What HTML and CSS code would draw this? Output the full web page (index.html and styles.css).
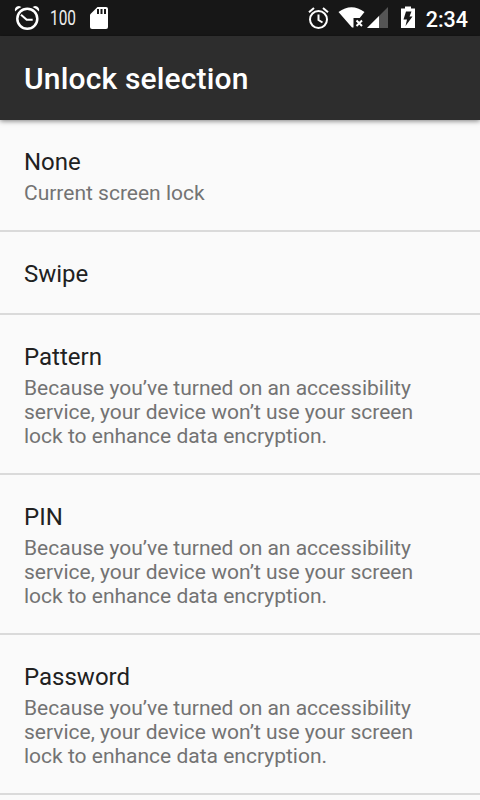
FILE: index.html
```
<!DOCTYPE html>
<html lang="en"><head><meta charset="utf-8"><title>Unlock selection</title><link rel="stylesheet" href="styles.css"></head>
<body>
<div class="status">
<svg class="icons" width="480" height="36" viewBox="0 0 480 36" fill="#fff">
<g fill="none" stroke="#fff"><circle cx="27.300" cy="18.700" r="10" stroke-width="2.500"/><path d="M21 14.800l5.700 5h6" stroke-width="2"/></g>
<path d="M15 11.500q-1-5 4-5.500l2.500 1q-4 1.500-6.500 4.500zM39 11.500q1-5-4-5.500l-2.500 1q4 1.500 6.500 4.500z"/>
<path d="M97.500 7H106q2 0 2 2v18q0 2-2 2H92q-2 0-2-2V14.500z"/><path d="M97 9h2v5h-2zm3.500 0h2v5h-2zm3.500 0h2v5h-2z" fill="#171717"/>
<g fill="none" stroke="#fff" stroke-width="2"><circle cx="318.500" cy="19.500" r="8.500"/><path d="M318.500 14.500v5.500l4 2.500M309 12.300l5-4.300M328 12.300l-5-4.300"/></g>
<path d="M338.500 12q13-9.500 26 0l-4.800 6h-6.200v9.500h-1.500z"/><path d="M356.500 20.500l5.500 5.500m0-5.500l-5.500 5.500" stroke="#fff" stroke-width="2"/>
<path d="M388 7v21h-21z" fill="#555"/><path d="M379 16v12h-12z"/>
<path d="M401 8.500h4V6.500h6v2h4V28h-14z"/><path d="M406 11.500h5.500l-2 5h3l-7 9.500 1.500-6.500h-3.500z" fill="#171717"/>
</svg>
<span class="count">100</span><span class="time">2:34</span>
</div>
<header>Unlock selection</header>
<main>
<section class="item"><h2>None</h2><p>Current screen lock</p></section>
<section class="item"><h2>Swipe</h2></section>
<section class="item"><h2>Pattern</h2><p>Because you’ve turned on an accessibility<br>service, your device won’t use your screen<br>lock to enhance data encryption.</p></section>
<section class="item"><h2>PIN</h2><p>Because you’ve turned on an accessibility<br>service, your device won’t use your screen<br>lock to enhance data encryption.</p></section>
<section class="item"><h2>Password</h2><p>Because you’ve turned on an accessibility<br>service, your device won’t use your screen<br>lock to enhance data encryption.</p></section>
</main>
</body></html>
```
FILE: styles.css
```
* { box-sizing: border-box; }
html, body { height: 100%; overflow: hidden; }
body { margin: 0; background: #fafafa; font-family: Roboto, sans-serif; }
.status { position: relative; height: 36px; background: #171717; color: #fff; display: flex; justify-content: space-between; align-items: center; padding: 0 12px 0 50px; }
.icons { position: absolute; left: 0; top: 0; }
.count { font-size: 20px; font-weight: 400; color: #eee; transform: scaleX(.77); transform-origin: left; }
.time { font-size: 21.5px; font-weight: 500; padding-top: 2px; }
header { position: relative; height: 84px; padding: 0 24px; background: #2d2d2d; color: #fff; font-size: 30px; font-weight: 500; line-height: 85px; letter-spacing: .16px; box-shadow: 0 1px 5px rgba(0,0,0,.5); }
.item { padding: 25px 24px 22px; border-bottom: 2px solid #dadada; white-space: nowrap; }
h2 { margin: 0; font-size: 24px; font-weight: 400; line-height: 34px; color: #212121; }
p { margin: 2px 0 3px; font-size: 21px; line-height: 24px; color: #737373; }
```
